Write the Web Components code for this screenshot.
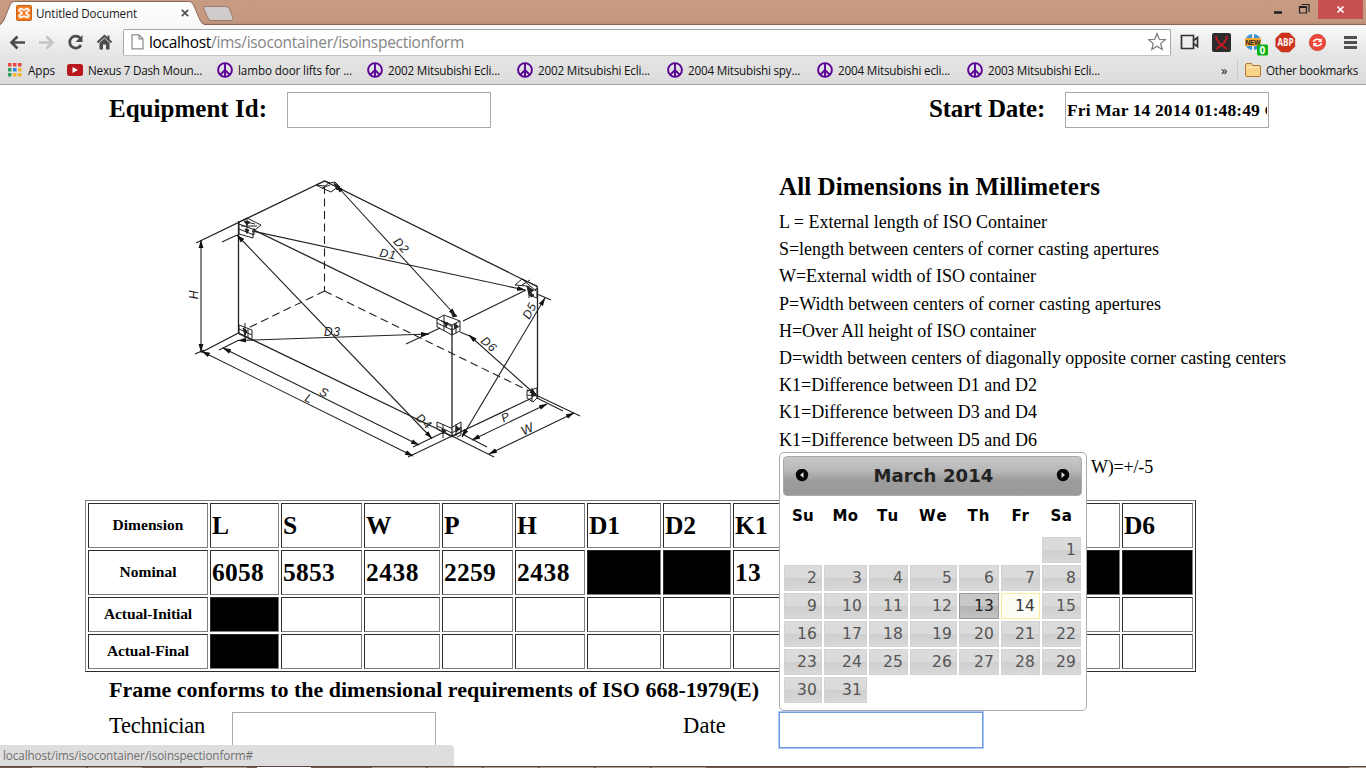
<!DOCTYPE html>
<html lang="en">
<head>
<meta charset="utf-8">
<title>Untitled Document</title>
<style>
html,body{margin:0;height:100%;overflow:hidden;background:#fff}
</style>
</head>
<body>
<desktop-screen></desktop-screen>
<script>
const define = (name, html, init) => {
  const tpl = document.createElement('template');
  tpl.innerHTML = html;
  customElements.define(name, class extends HTMLElement {
    connectedCallback() {
      if (this.shadowRoot) return;
      this.attachShadow({mode: 'open'}).append(tpl.content.cloneNode(true));
      if (init) init(this, this.shadowRoot);
    }
  });
};

/* Text run tracked so that it fills the width given in w */
define('fit-text', `<style>:host{display:inline-block;white-space:pre}</style><slot></slot>`, host => {
  const w = parseFloat(host.getAttribute('w'));
  const n = host.textContent.length;
  const nat = host.getBoundingClientRect().width;
  if (w && n) {
    host.style.letterSpacing = ((w - nat) / n).toFixed(4) + 'px';
  }
});

define('text-field', `<style>
:host{display:flex;align-items:center;box-sizing:border-box;width:204px;height:36px;border:1px solid #a9a9a9;background:#fff;padding:0 1px;overflow:hidden;flex:none}
:host([focused]){border-color:#6f9ae0;box-shadow:0 0 0 1px #a9c5f3}
div{overflow:hidden;white-space:nowrap;font:bold 17.500px/34px "Liberation Serif",serif;width:200px}
</style><div><slot></slot></div>`);

define('book-mark', `<style>
:host{display:flex;align-items:center;width:150px;height:22px;flex:none;font:11.700px/20px "Open Sans","Noto Sans",sans-serif;color:#111}
svg{width:16px;height:16px;margin-right:5px}
</style><svg viewBox="0 0 16 16" fill="none" stroke="#5a0096" stroke-width="1.9"><circle cx="8" cy="8" r="6.9"/><path d="M8 1v14M8 8l-4.8 4.8M8 8l4.8 4.8"/></svg><slot></slot>`);

define('browser-tabs', `<style>
:host{display:flex;height:24px;background:linear-gradient(#c79c83,#c3987f 21px,#b98e76);border-bottom:1px solid #8b6352;position:relative}
svg{display:block;flex:none}
.tab{position:absolute;left:0;top:0}
.row{display:flex;align-items:center;position:relative;width:1366px;height:24px;font:11.700px/16px "Open Sans","Noto Sans",sans-serif;color:#1c1c1c}
.ico{margin-left:16px;margin-right:4px;margin-top:2px}
fit-text{margin-top:2px}
.x{margin:2px 0 0 43px}
.win{position:absolute;right:0;top:0}
</style>
<svg class="tab" width="240" height="26" viewBox="0 0 240 26"><defs><linearGradient id="a" x2="0" y2="1"><stop stop-color="#fff"/><stop offset="1" stop-color="#f8f8f8"/></linearGradient></defs>
<path d="M0 25Q2 24 4 20L10 5Q11.500 1.500 14 1.500H189Q192 1.500 193.500 5L200 20Q202 24.500 205 24.500V26H0Z" fill="url(#a)"/><path d="M0 24.500Q2 24 4 20L10 5Q11.500 1.500 14 1.500H189Q192 1.500 193.500 5L200 20Q202 24.500 205 24.500" fill="none" stroke="#8b6c5c"/>
<path d="M205 6.500H226Q228.500 6.500 229.500 9L233 18Q233.500 20.500 231 20.500H211Q209 20.500 208 18L203.500 8Q203 6.500 205 6.500Z" fill="#cfcccb" stroke="#9a7b6c"/></svg>
<div class="row">
<svg class="ico" width="16" height="16" viewBox="0 0 16 16"><rect x=".5" y=".5" width="15" height="15" rx="1" fill="#f47b20" stroke="#c9600f"/><path d="M4.500 3.700c-1.800.5-1.800 2.600.2 2.900L6 8 4.700 9.400c-2 .3-2 2.400-.2 2.900 1.800.4 2.600-1.200 3.500-1.200s1.700 1.600 3.500 1.200c1.800-.5 1.800-2.600-.2-2.900L10 8l1.300-1.400c2-.3 2-2.400.2-2.900-1.800-.4-2.600 1.200-3.500 1.200S6.300 3.300 4.500 3.700Z" fill="none" stroke="#fff" stroke-width="1.800"/></svg>
<fit-text w="101">Untitled Document</fit-text>
<svg class="x" width="10" height="10" viewBox="0 0 10 10"><path d="M1.800 1.800l6.400 6.400M8.200 1.800L1.800 8.200" stroke="#555" stroke-width="1.800"/></svg>
<svg class="win" width="106" height="19" viewBox="0 0 106 19"><path d="M14 12.500h8" stroke="#222" stroke-width="2.500"/><path d="M41.500 4.500h7.500v7.500M39.500 6.500h7v6.500h-7z" fill="none" stroke="#222" stroke-width="1.200"/><path d="M39 7h8" stroke="#222" stroke-width="2"/><rect x="58" width="45" height="19" fill="#c75050"/><path d="M77.500 6.500l6 6M83.500 6.500l-6 6" stroke="#fff" stroke-width="1.700"/></svg>
</div>`);

define('browser-toolbar', `<style>
:host{display:flex;align-items:center;height:31px;position:relative}
svg{display:block;flex:none}
.omni{display:flex;align-items:center;box-sizing:border-box;width:1048px;height:27px;margin-left:8px;border:1px solid #a8a8a8;border-bottom-color:#c3c3c3;border-radius:2px;background:#fff;font:15.500px/22px "Open Sans","Noto Sans",sans-serif;color:#858585;margin-top:3px}
.omni svg:first-child{margin:0 5px 0 7px}
.host{color:#000}
.star{margin-left:auto;margin-right:3px}
.nav,.ext{margin-top:3px}
</style>
<svg class="nav" width="115" height="26" viewBox="0 0 115 26" fill="none" stroke="#4c4c4c" stroke-width="2.700">
<path d="M25 13.500H12M17.500 7.500l-6 6 6 6"/><path stroke="#c4c4c4" d="M39 13.500H52M46.500 7.500l6 6-6 6"/><path d="M80.500 9.500A6 6 0 1 0 81 16"/><path d="M82.500 6v7h-7z" fill="#4c4c4c" stroke="none"/><path d="M97.500 13.500l7-6.500 7 6.500" stroke-width="2.200"/><path d="M99.500 14l5-4.700 5 4.700v6.500h-3.500v-5h-3v5h-3.500zM107.500 6.500h2v4h-2z" fill="#4c4c4c" stroke="none"/></svg>
<div class="omni"><svg width="13" height="16" viewBox="0 0 13 16"><path d="M1 .8h7l4 4v10H1zM8 .8v4h4" fill="#fff" stroke="#8b8b8b" stroke-width="1.200"/></svg>
<fit-text w="62" class="host">localhost</fit-text><fit-text w="253">/ims/isocontainer/isoinspectionform</fit-text>
<svg class="star" width="20" height="20" viewBox="0 0 20 20"><path d="M10 1.700l2.300 5.600 6 .4-4.600 3.900 1.500 5.900L10 14.300l-5.200 3.200 1.500-5.900L1.700 7.700l6-.4z" fill="#fff" stroke="#777" stroke-width="1.200"/></svg></div>
<svg class="ext" width="190" height="27" viewBox="1171 29 190 27">
<path d="M1181.500 35.500h12v13h-12zM1193.500 40.500l4-3v9l-4-3" fill="#eee" stroke="#333" stroke-width="1.700"/>
<rect x="1212" y="33" width="19" height="19" rx="2" fill="#2c2c2c"/><path d="M1216 36c0 4 3 8 11 13M1227 36c0 4-3 8-11 13" fill="none" stroke="#c01920" stroke-width="2"/>
<circle cx="1253" cy="42" r="8" fill="#3d94d6"/><path d="M1253 33v18" stroke="#eee" stroke-width="2"/><rect x="1245" y="38" width="16" height="8" fill="#f4a836"/><text x="1245.500" y="44.600" textLength="15" font-family="Liberation Sans" font-weight="bold" font-size="6.500" fill="#222">NEW</text>
<rect x="1257" y="44.500" width="11" height="11" rx="1.500" fill="#0bb416"/><text x="1259.400" y="53.600" font-family="Open Sans" font-weight="bold" font-size="10" fill="#fff">0</text>
<path d="M1281.300 33h8l5.500 5.500v8l-5.500 5.500h-8l-5.500-5.500v-8z" fill="#cf3218" stroke="#b3341f" stroke-width=".6"/><text x="1277.500" y="46.300" textLength="16" lengthAdjust="spacingAndGlyphs" font-family="Open Sans" font-weight="bold" font-size="10" fill="#fff">ABP</text>
<circle cx="1317.500" cy="42.500" r="8.200" fill="#ee4738" stroke="#cb3c30" stroke-width=".7"/><path d="M1313.500 42a4 3.200 0 0 1 6.500-2M1321.500 43a4 3.200 0 0 1-6.500 2" fill="none" stroke="#fff" stroke-width="1.700"/><path d="M1321.800 38v4h-4zM1313.200 47v-4h4z" fill="#fff"/>
<path d="M1344 37.500h13M1344 42.500h13M1344 47.500h13" stroke="#505050" stroke-width="3"/></svg>`);

define('bookmark-bar', `<style>
:host{display:flex;align-items:center;height:28px;padding-left:8px;font:11.700px/20px "Open Sans","Noto Sans",sans-serif;color:#111}
svg{display:block;flex:none}
.sep{width:1px;height:22px;background:#c5ccd1;margin:0 7px 0 8px}
.more{margin-left:104px;margin-top:-1px}
</style>
<svg width="14" height="14" viewBox="0 0 14 14"><g fill="#e8453c"><path d="M0 0h3.500v3.500H0zM5 0h3.500v3.500H5zM10 0h3.500v3.500H10z"/></g><path fill="#2e9e58" d="M0 5h3.500v3.500H0zM0 10h3.500v3.500H0z"/><path fill="#2d87e8" d="M5 5h3.500v3.500H5z"/><path fill="#f3b32a" d="M10 5h3.500v3.500H10zM5 10h3.500v3.500H5zM10 10h3.500v3.500H10z"/></svg>
<fit-text w="27" style="margin:0 12px 0 6px">Apps</fit-text>
<svg width="16" height="12" viewBox="0 0 16 12"><rect width="16" height="12" rx="2.500" fill="#b8181b"/><path d="M5.500 3l5.500 3-5.500 3z" fill="#fff"/></svg>
<fit-text w="114" style="margin:0 15px 0 5px">Nexus 7 Dash Moun...</fit-text>
<book-mark><fit-text w="114">lambo door lifts for ...</fit-text></book-mark>
<book-mark><fit-text w="112">2002 Mitsubishi Ecli...</fit-text></book-mark>
<book-mark><fit-text w="112">2002 Mitsubishi Ecli...</fit-text></book-mark>
<book-mark><fit-text w="112">2004 Mitsubishi spy...</fit-text></book-mark>
<book-mark><fit-text w="112">2004 Mitsubishi ecli...</fit-text></book-mark>
<book-mark><fit-text w="112">2003 Mitsubishi Ecli...</fit-text></book-mark>
<fit-text class="more" w="8" style="font-size:13px">»</fit-text><i class="sep"></i>
<svg width="16" height="14" viewBox="0 0 16 14"><path d="M.5 12V2Q.5.500 2 .500h4.500L8 2.500h6q1.500 0 1.500 1.500v8q0 1.500-1.500 1.500H2Q.5 13.500.5 12z" fill="#f8d48b" stroke="#b27a35"/><path d="M1.500 4.500h13" stroke="#fdeabf"/></svg>
<fit-text w="92" style="margin-left:5px">Other bookmarks</fit-text>`);

define('browser-chrome', `<style>
:host{display:block;height:85px;box-sizing:border-box;border-bottom:1px solid #a3a3a3;background:#dedede}
.bars{height:59px;background:linear-gradient(#f9f9f9,#e4e4e4 32px,#dcdcdc)}
</style><browser-tabs></browser-tabs><div class="bars"><browser-toolbar></browser-toolbar><bookmark-bar></bookmark-bar></div>`);

define('container-diagram', `<style>:host{display:block;width:420px;height:300px}svg{display:block}
.one path{marker-end:url(#m)}.two path{marker-end:url(#m);marker-start:url(#m)}</style>
<svg width="420" height="300" viewBox="180 170 420 300" fill="none" stroke="#222" stroke-width="1.100">
<defs><marker id="m" markerUnits="userSpaceOnUse" markerWidth="9" markerHeight="6" refX="8" refY="3" orient="auto-start-reverse" viewBox="0 0 9 6"><path d="M0 .6L8.500 3 0 5.400z" fill="#111" stroke="none" style="marker:none"/></marker></defs>
<path d="M196 243L324.500 181L538 287M238.500 221V334M201 352.500L238.500 333L452 436M254 230L437 319M463 321L526 290M195 354l9-4M452 328V436M537.500 288V398M452 436L532 398" stroke-width="1.300"/>
<path d="M222 242l15-7M219 350l20-10M452 436L408 457M444 432L413 447M452 436L494 457M462 434L487 447M538 396L580 416M537 398L563 411M406 344L440 328M460 332L472 337M537 294L551 300"/>
<path d="M324.500 186V291M324.500 291L246 329M324.500 291L529 391" stroke-dasharray="8 4.500"/>
<g class="one"><path d="M252 231L525 290"/></g>
<g class="two"><path d="M336 185L456 316"/><path d="M545 298L462 437"/><path d="M201 240V352"/><path d="M237 235L432 438.500"/><path d="M238 340.500L429 334"/><path d="M223 348L419 445"/><path d="M202 351.500L413 456"/><path d="M469 335L537 396"/><path d="M472 440L547 404"/><path d="M489 454L574 413"/></g>
<g stroke-width="1"><path d="M316 185l9-4 5 2 5-1 4 4-8 6-9-4-6-3 9 1 5-4M322 188l8-3M239 222l8-4 14 7-6 5-16-6M239 229l15 6v-7M239 222v12l14 4v-8M247 218v16M241 226h16M246 222l9 2M515 285l7-6 15 7v12l-8-3-2-9-12-1M522 279l14 12M529 286v12M522 285l8-5M528 293l10-5M437 319l7-4 16 6v10l-8 4-15-8zM437 319l15 6 8-4M452 325v10M444 315v16M441 321l12 6M437 323l15 7 8-4M456 323v10M239 325l13 5v10l-13-6zM239 329l13 6M245 323v15M248 329v9M437 422l14 6 10-6v10l-9 5-15-8zM437 426l15 7 9-6M443 424v14M456 424v12M461 427v8l-4 2M527 391l10-3v10l-4 4-6-4zM527 395l10 1M532 388v14"/><path d="M334 183l6 4-3 3zM244 221l6 1-3 3zM245 229l4 1-2 3zM527 286l6 4-3 4zM530 293l4 2-3 2zM444 322l4 1-2 4zM454 324l4 2-3 3zM451 311l6 5-4 1zM456 426l4 3-4 3zM442 429l4 2-3 3zM243 328l4 3-2 4zM532 391l4 3-4 3z" fill="#222"/></g>
<g fill="#222" stroke="none" font-family="Liberation Sans" font-size="12" font-style="italic" text-anchor="middle">
<text transform="translate(198 295) rotate(-90)">H</text><text transform="translate(387 258) rotate(10)" textLength="16">D1</text><text transform="translate(398 248) rotate(48)" textLength="16">D2</text><text x="332" y="335.500" textLength="16">D3</text><text transform="translate(421 424) rotate(42)" textLength="16">D4</text><text transform="translate(533 313) rotate(-62)" textLength="16">D5</text><text transform="translate(486 347) rotate(42)" textLength="16">D6</text><text transform="translate(322 396) rotate(26)">S</text><text transform="translate(307 402) rotate(26)">L</text><text transform="translate(507 421) rotate(-26)">P</text><text transform="translate(529 433) rotate(-26)" font-size="13">W</text></g>
</svg>`);

define('dimension-legend', `<style>
:host{display:block;padding-top:2px;color:#000;font:18px/27.200px "Liberation Serif",serif}
h2{margin:0 0 7px;font-size:25px;line-height:30px}
.l{height:27.200px}
.last{padding-left:312px}
</style>
<h2><fit-text w="321">All Dimensions in Millimeters</fit-text></h2>
<div class="l"><fit-text w="268">L = External length of ISO Container</fit-text></div>
<div class="l"><fit-text w="380">S=length between centers of corner casting apertures</fit-text></div>
<div class="l"><fit-text w="257">W=External width of ISO container</fit-text></div>
<div class="l"><fit-text w="382">P=Width between centers of corner casting apertures</fit-text></div>
<div class="l"><fit-text w="257">H=Over All height of ISO container</fit-text></div>
<div class="l"><fit-text w="507">D=width between centers of diagonally opposite corner casting centers</fit-text></div>
<div class="l"><fit-text w="258">K1=Difference between D1 and D2</fit-text></div>
<div class="l"><fit-text w="258">K1=Difference between D3 and D4</fit-text></div>
<div class="l"><fit-text w="258">K1=Difference between D5 and D6</fit-text></div>
<div class="l last"><fit-text w="62">W)=+/-5</fit-text></div>`);

define('dimension-table', `<style>
:host{display:grid;box-sizing:border-box;width:1111px;height:172px;padding:2px;gap:2px;border:1px solid;border-color:#808080 #2c2c2c #2c2c2c #808080;
grid-template-columns:120px 69px 81px 76px 71px 70px 74px 68px 76px 76px 76px 76px 75px 71px;grid-template-rows:45px 45px 35px 35px;font:bold 25.500px/1 "Liberation Serif",serif}
div{box-sizing:border-box;border:1px solid;border-color:#2c2c2c #808080 #808080 #2c2c2c;display:flex;align-items:center;padding-left:1px;overflow:hidden}
.h{justify-content:center;font-size:15.500px;padding:0 0 1px}
.k{background:#000}
</style>`, (host, root) => {
  const rows = [
    [['Dimension', 71], 'L', 'S', 'W', 'P', 'H', 'D1', 'D2', 'K1', '', '', '', '', 'D6'],
    [['Nominal', 57], '6058', '5853', '2438', '2259', '2438', '#', '#', '13', '', '', '', '#', '#'],
    [['Actual-Initial', 88], '#', '', '', '', '', '', '', '', '', '', '', '', ''],
    [['Actual-Final', 82], '#', '', '', '', '', '', '', '', '', '', '', '', '']
  ];
  const widths = {'6058': 52, '5853': 52, '2438': 53, '2259': 52, D1: 31, D2: 31, K1: 33, D6: 31, '13': 26};
  for (const row of rows) for (const c of row) {
    const d = document.createElement('div');
    if (c === '#') d.className = 'k';
    else if (c) {
      const [t, w] = Array.isArray(c) ? c : [c, widths[c]];
      if (Array.isArray(c)) d.className = 'h';
      const f = document.createElement('fit-text');
      f.textContent = t;
      if (w) f.setAttribute('w', w);
      d.append(f);
    }
    root.append(d);
  }
});

define('date-picker', `<style>
:host{display:block;box-sizing:border-box;width:308px;height:259px;padding:3px;border:1px solid #aaa;border-radius:5px;background:#fff;font:15.500px/24px "DejaVu Sans",sans-serif;color:#555}
header{display:flex;align-items:center;justify-content:space-between;box-sizing:border-box;height:40px;width:299px;padding:0 11px;border:1px solid #aaa;border-radius:4px;background:linear-gradient(#c8c8c8,#b8b8b8 35%,#9c9c9c 62%,#999);color:#222;font:bold 18px/38px "DejaVu Sans",sans-serif}
header fit-text{margin-left:2px}
svg{display:block}
.g{display:grid;gap:2px;grid-template-columns:38px 43px 39px 47px 40px 39px 39px;grid-auto-rows:26px;padding-left:1px}
.w{grid-auto-rows:41px;color:#000;font:bold 15px/41px "DejaVu Sans",sans-serif;text-align:center}
.d{text-align:right;box-sizing:border-box;padding-right:4px;border:1px solid #d3d3d3;background:linear-gradient(#dbdbdb 48%,#cfcfcf 52%,#d8d8d8)}
.t{background:#fdfcf5;border-color:#f9eba0;color:#363636}
.s{background:linear-gradient(#c8c8c8 48%,#b3b3b3 52%,#c3c3c3);border-color:#999;color:#212121}
</style>
<header><svg width="14" height="14" viewBox="0 0 14 14"><circle cx="7" cy="6" r="6.200" fill="#050505"/><path d="M8.500 3v6L5 6z" fill="#ddd"/></svg><fit-text w="120">March 2014</fit-text><svg width="14" height="14" viewBox="0 0 14 14"><circle cx="7" cy="6" r="6.200" fill="#050505"/><path d="M5.500 3v6L9 6z" fill="#ddd"/></svg></header>
<div class="g w"></div><div class="g days"></div>`, (host, root) => {
  const week = root.querySelector('.w'), days = root.querySelector('.days');
  const cell = (parent, cls, text, w) => {
    const d = document.createElement('div');
    d.className = cls;
    const f = document.createElement('fit-text');
    f.setAttribute('w', w);
    f.textContent = text;
    d.append(f);
    parent.append(d);
    return d;
  };
  [['Su', 22], ['Mo', 26], ['Tu', 23], ['We', 29], ['Th', 23], ['Fr', 18], ['Sa', 22]].forEach(([t, w]) => cell(week, '', t, w));
  for (let i = 1; i < 32; i++) {
    const d = cell(days, 'd' + (i === 13 ? ' s' : i === 14 ? ' t' : ''), i, i < 10 ? 10 : 20);
    if (i === 1) d.style.gridColumn = 7;
  }
});

define('inspection-form', `<style>
:host{display:flex;flex-direction:column;box-sizing:border-box;height:681px;padding-top:7px;overflow:hidden;font:25px/34px "Liberation Serif",serif;color:#000}
.row{display:flex;align-items:flex-start;padding-left:109px}
.id{font-weight:bold}
.mid{display:grid;grid-template-columns:599px auto;padding:42px 0 0 180px;height:330px}
dimension-table{margin-left:85px}
.frame{height:40px;padding-left:109px;font:bold 22px/36px "Liberation Serif",serif}
.sign{font-size:22.500px;line-height:27px}
</style>
<div class="row id"><fit-text w="158" style="margin-right:20px">Equipment Id:</fit-text><text-field></text-field><fit-text w="116" style="margin:0 20px 0 438px">Start Date:</fit-text><text-field><fit-text w="193">Fri Mar 14 2014 01:48:49</fit-text>&nbsp;G</text-field></div>
<div class="mid"><container-diagram></container-diagram><dimension-legend></dimension-legend></div>
<dimension-table></dimension-table>
<div class="frame"><fit-text w="650">Frame conforms to the dimensional requirements of ISO 668-1979(E)</fit-text></div>
<div class="row sign"><fit-text w="96" style="margin-right:27px">Technician</fit-text><text-field></text-field><fit-text w="43" style="margin:0 53px 0 247px">Date</fit-text><text-field focused></text-field></div>`);

define('task-bar', `<style>
:host{display:flex;height:2px;box-sizing:border-box;border-top:1px solid #5a4840;background:#755c4e;gap:2px}
i{height:1px;width:54px;background:#b0a198}
.gap{background:none;width:57px}.on{background:#fff}.s{width:44px}
</style><i class="gap" style="width:30px"></i><i></i><i></i><i class="gap"></i><i class="s"></i><i class="gap" style="width:6px"></i><i class="on"></i><i class="gap"></i><i></i><i></i><i></i><i></i><i></i><i></i><i class="gap" style="flex:1"></i><i style="width:17px"></i>`);

define('status-bubble', `<style>:host{display:block;box-sizing:border-box;width:454px;height:21px;padding-left:3px;background:#dedede;border-radius:0 4px 0 0;color:#6e6e6e;font:11.700px/21px "Open Sans","Noto Sans",sans-serif}</style><slot></slot>`);

define('desktop-screen', `<style>
:host{display:block;position:relative;width:1366px;height:768px;overflow:hidden;background:#fff}
date-picker{position:absolute;left:779px;top:452px}
status-bubble{position:absolute;left:0;top:745px}
</style><browser-chrome></browser-chrome><inspection-form></inspection-form><task-bar></task-bar><date-picker></date-picker><status-bubble><fit-text w="250">localhost/ims/isocontainer/isoinspectionform#</fit-text></status-bubble>`);
</script>
</body>
</html>
